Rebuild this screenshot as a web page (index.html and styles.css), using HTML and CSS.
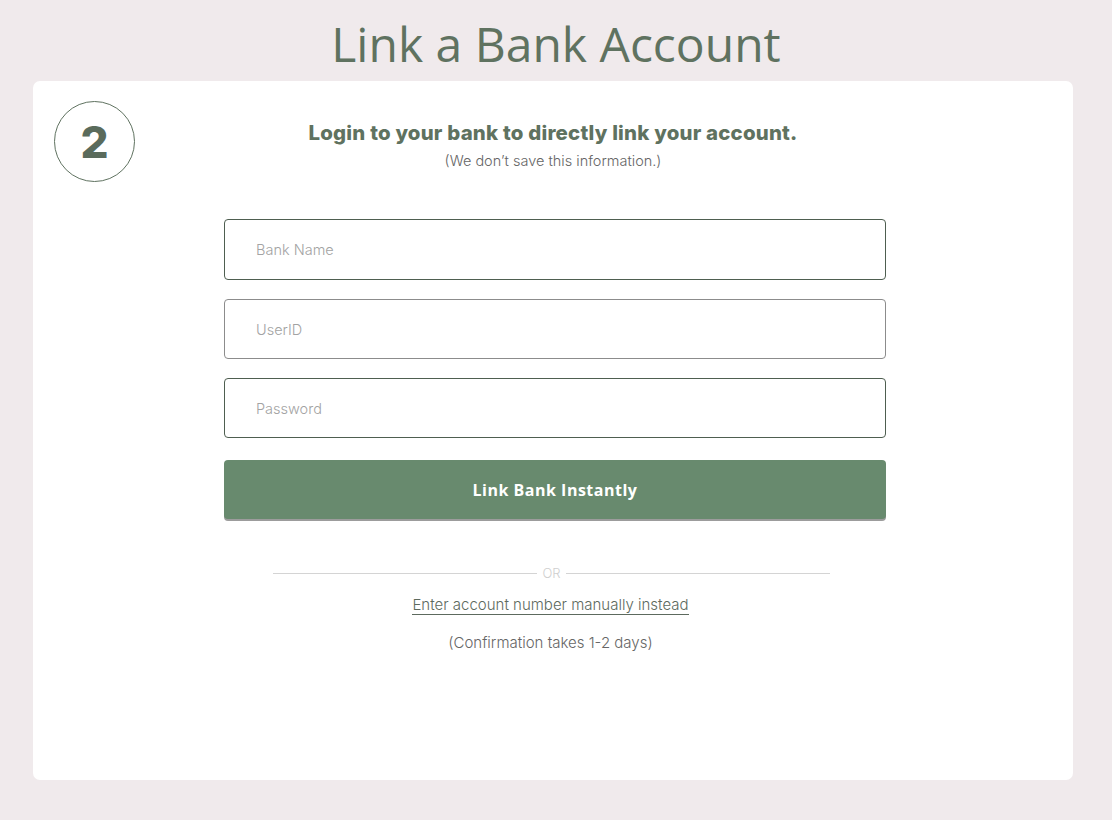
FILE: index.html
```html
<!DOCTYPE html>
<html>
<head>
<meta charset="utf-8">
<link rel="stylesheet" href="styles.css">
</head>
<body>
<h1 class="title">Link a Bank Account</h1>
<main class="card">
  <div class="step">2</div>
  <div class="intro">
    <h2 class="lead">Login to your bank to directly link your account.</h2>
    <p class="note">(We don’t save this information.)</p>
  </div>
  <form class="form">
    <div class="field field-focus"><span class="ph">Bank Name</span></div>
    <div class="field field-grey"><span class="ph">UserID</span></div>
    <div class="field field-focus"><span class="ph">Password</span></div>
    <button type="button" class="btn">Link Bank Instantly</button>
  </form>
  <div class="divider"><span class="line"></span><span class="or">OR</span><span class="line"></span></div>
  <a class="manual" href="#">Enter account number manually instead</a>
  <p class="confirm">(Confirmation takes 1-2 days)</p>
</main>
</body>
</html>
```
FILE: styles.css
```css
* { box-sizing: border-box; }
body {
  margin: 0;
  background: #f0eaec;
  font-family: "Inter", "Liberation Sans", sans-serif;
  height: 820px;
}
.title {
  margin: 0;
  padding-top: 14px;
  height: 81px;
  text-align: center;
  font-family: "Open Sans", sans-serif;
  font-weight: normal;
  font-size: 48px;
  line-height: 60px;
  color: #5f7260;
}
.card {
  position: relative;
  margin: 0 39px 0 33px;
  height: 699px;
  background: #ffffff;
  border-radius: 7px;
  display: flex;
  flex-direction: column;
  align-items: center;
  padding-top: 120px;
}
.step {
  position: absolute;
  left: 21px;
  top: 20px;
  width: 81px;
  height: 81px;
  border: 1px solid #5f7260;
  border-radius: 50%;
  display: flex;
  align-items: center;
  justify-content: center;
  font-family: "Inter", sans-serif;
  font-weight: 800;
  font-size: 44px;
  color: #5a6b5c;
}
.intro {
  position: absolute;
  left: 0;
  right: 0;
  top: 38px;
  text-align: center;
}
.lead {
  margin: 0;
  font-size: 20.4px;
  font-weight: 800;
  color: #5f7260;
  line-height: 28px;
  letter-spacing: 0.2px;
}
.note {
  margin: 2px 0 0;
  font-size: 14.5px;
  font-weight: 300;
  color: #666;
  line-height: 24px;
}
.form {
  margin-top: 18px;
  margin-left: 4px;
  width: 662px;
  display: flex;
  flex-direction: column;
  gap: 19px;
}
.field {
  height: 60px;
  border-radius: 4px;
  border: 1px solid #8c8c8c;
  display: flex;
  align-items: center;
  padding-left: 31px;
}
.field-focus { border-color: #4e5e50; }
.field:first-child { height: 61px; }
.ph {
  font-size: 14.5px;
  font-weight: 300;
  color: #a3a3a3;
}
.btn {
  margin-top: 3px;
  height: 59px;
  border: 0;
  border-radius: 4px;
  background: #688a6e;
  box-shadow: 0 2px 0 #9c9c9c;
  color: #ffffff;
  font-family: "Open Sans", sans-serif;
  font-weight: 700;
  font-size: 16px;
  letter-spacing: 0.5px;
}
.divider {
  margin-top: 46px;
  margin-left: -3px;
  width: 557px;
  display: flex;
  align-items: center;
  gap: 5px;
}
.line {
  flex: 1;
  height: 1px;
  background: #d4d4d4;
}
.or {
  font-size: 13px;
  font-weight: 300;
  color: #cfcfcf;
}
.manual {
  margin-top: 15px;
  margin-left: -5px;
  font-size: 15px;
  font-weight: 300;
  color: #5d6a5e;
  text-decoration: none;
  border-bottom: 1px solid #5d6a5e;
  line-height: 18px;
}
.confirm {
  margin: 18px 0 0 -5px;
  font-size: 15px;
  font-weight: 300;
  color: #666;
}
```
